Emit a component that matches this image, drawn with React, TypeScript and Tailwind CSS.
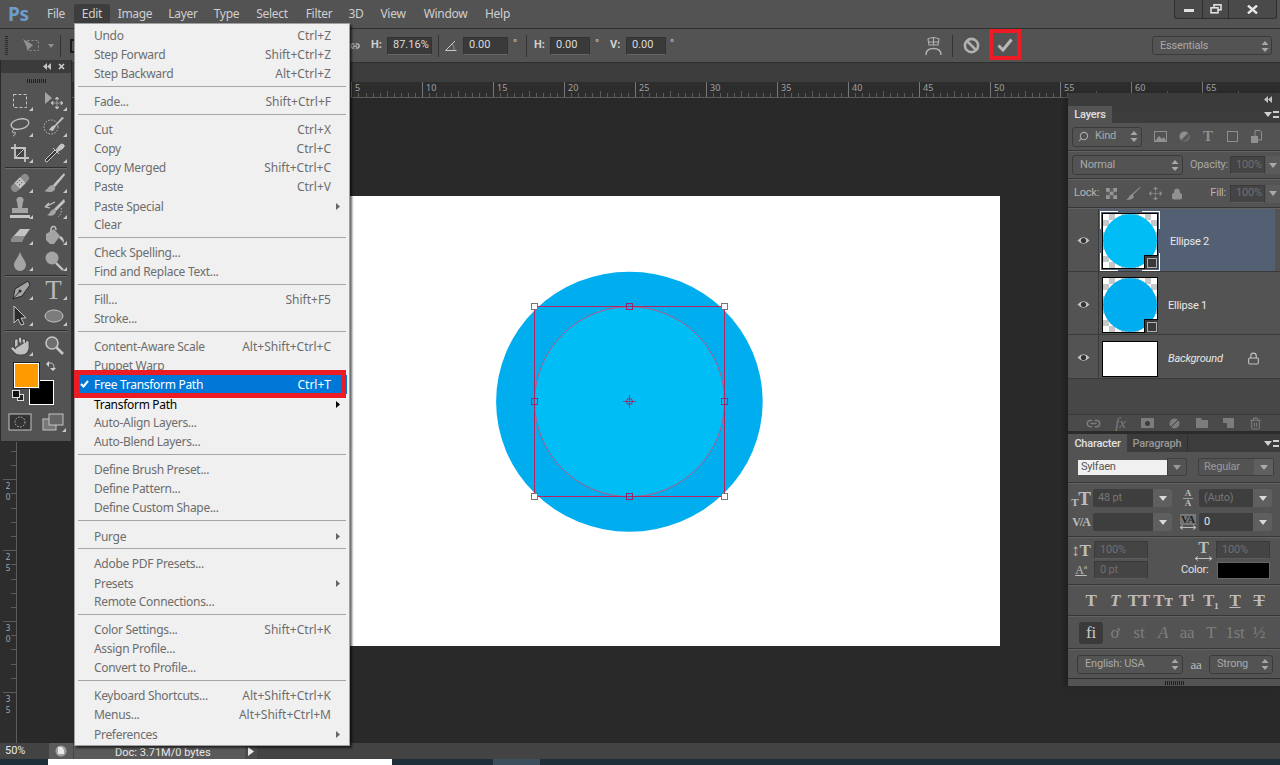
import React from 'react';
import { Hand, Link2, Trash2, Lock, Search } from 'lucide-react';

type MenuItem = { label: string; keys?: string; arrow?: boolean; black?: boolean; active?: boolean } | 'sep';

const MENU: MenuItem[] = [
  { label: 'Undo', keys: 'Ctrl+Z' },
  { label: 'Step Forward', keys: 'Shift+Ctrl+Z' },
  { label: 'Step Backward', keys: 'Alt+Ctrl+Z' },
  'sep',
  { label: 'Fade...', keys: 'Shift+Ctrl+F' },
  'sep',
  { label: 'Cut', keys: 'Ctrl+X' },
  { label: 'Copy', keys: 'Ctrl+C' },
  { label: 'Copy Merged', keys: 'Shift+Ctrl+C' },
  { label: 'Paste', keys: 'Ctrl+V' },
  { label: 'Paste Special', arrow: true },
  { label: 'Clear' },
  'sep',
  { label: 'Check Spelling...' },
  { label: 'Find and Replace Text...' },
  'sep',
  { label: 'Fill...', keys: 'Shift+F5' },
  { label: 'Stroke...' },
  'sep',
  { label: 'Content-Aware Scale', keys: 'Alt+Shift+Ctrl+C' },
  { label: 'Puppet Warp' },
  { label: 'Free Transform Path', keys: 'Ctrl+T', active: true },
  { label: 'Transform Path', arrow: true, black: true },
  { label: 'Auto-Align Layers...' },
  { label: 'Auto-Blend Layers...' },
  'sep',
  { label: 'Define Brush Preset...' },
  { label: 'Define Pattern...' },
  { label: 'Define Custom Shape...' },
  'sep',
  { label: 'Purge', arrow: true },
  'sep',
  { label: 'Adobe PDF Presets...' },
  { label: 'Presets', arrow: true },
  { label: 'Remote Connections...' },
  'sep',
  { label: 'Color Settings...', keys: 'Shift+Ctrl+K' },
  { label: 'Assign Profile...' },
  { label: 'Convert to Profile...' },
  'sep',
  { label: 'Keyboard Shortcuts...', keys: 'Alt+Shift+Ctrl+K' },
  { label: 'Menus...', keys: 'Alt+Shift+Ctrl+M' },
  { label: 'Preferences', arrow: true },
];

function Stepper() {
  return (
    <svg width="8" height="13" viewBox="0 0 8 13" className="shrink-0">
      <path d="M4 1 L7.5 5 L0.5 5 Z M4 12 L7.5 8 L0.5 8 Z" fill="#a8a8a8" />
    </svg>
  );
}

function Caret({ color = '#d8d8d8' }: { color?: string }) {
  return (
    <svg width="8" height="5" viewBox="0 0 8 5" className="shrink-0">
      <path d="M0 0 H8 L4 5 Z" fill={color} />
    </svg>
  );
}

function Corner() {
  return (
    <svg width="4" height="4" viewBox="0 0 4 4" className="absolute right-[3px] bottom-[3px]">
      <path d="M4 0 V4 H0 Z" fill="#c8c8c8" />
    </svg>
  );
}

function Tool({ children, corner = true }: { children: React.ReactNode; corner?: boolean }) {
  return (
    <div className="relative w-[33px] h-[26px] flex items-center justify-center">
      <svg width="24" height="24" viewBox="0 0 24 24">
        {children}
      </svg>
      {corner && <Corner />}
    </div>
  );
}

function ToolsPanel() {
  const g = '#a4a4a4';
  const l = '#c4c4c4';
  return (
    <div className="absolute left-0 top-[60px] w-[72px] h-[382px] bg-[#535353] border-l border-r border-b border-[#2a2a2a] flex flex-col">
      <div className="h-[13px] bg-[#3b3b3b] flex items-center justify-end gap-[7px] pr-[6px] shrink-0">
        <svg width="8" height="7" viewBox="0 0 8 7"><path d="M4 0 V7 L0 3.5 Z M8 0 V7 L4 3.5 Z" fill="#c0c0c0" /></svg>
        <svg width="7" height="7" viewBox="0 0 7 7"><path d="M1 1 L6 6 M6 1 L1 6" stroke="#d0d0d0" strokeWidth="1.6" /></svg>
      </div>
      <div className="h-[15px] flex items-center justify-center shrink-0">
        <div className="w-[19px] h-[4px] bg-[repeating-linear-gradient(90deg,#1f1f1f_0,#1f1f1f_1px,transparent_1px,transparent_2px)]" />
      </div>
      <div className="grid grid-cols-2 pl-[2px]">
        <Tool><rect x="5.5" y="5.5" width="13" height="13" fill="none" stroke={l} strokeDasharray="3 2" /></Tool>
        <Tool>
          <path d="M3 3 V15 L10 9 Z" fill={g} />
          <path d="M15 8 V20 M9 14 H21 M15 8 l-2 2 h4 Z M15 20 l-2 -2 h4 Z M9 14 l2 -2 v4 Z M21 14 l-2 -2 v4 Z" stroke={l} fill={l} strokeWidth="0.6" />
        </Tool>
        <Tool>
          <ellipse cx="12" cy="9" rx="9" ry="5" fill="none" stroke={l} strokeWidth="1.3" transform="rotate(-12 12 9)" />
          <path d="M6 14 C3 17 5 19 7 17 C8 19 6 21 5 21" fill="none" stroke={l} strokeWidth="1" />
        </Tool>
        <Tool>
          <circle cx="9" cy="12" r="7" fill="none" stroke={l} strokeDasharray="1.5 1.5" />
          <path d="M22 3 L14 11 L11 16 L7 15 C9 12 10 11 13 10 L20 2 Z" fill={l} />
        </Tool>
        <Tool>
          <path d="M7 3 V17 H21 M3 7 H17 V21" fill="none" stroke={l} strokeWidth="1.8" />
          <rect x="8" y="8" width="8" height="8" fill="#3a3a3a" opacity="0.6" />
          <path d="M8 16 L16 8" stroke={l} strokeWidth="1" />
        </Tool>
        <Tool>
          <path d="M4 21 L3 19 L13 9 L15 11 L5 21 Z" fill="#3a3a3a" stroke={l} />
          <path d="M11 7 L17 13 M14 9 L18 4 Q20 2 22 4 Q23 6 20 8 L15 11" fill={l} stroke={l} />
        </Tool>
      </div>
      <div className="h-[1px] mx-[4px] my-[1px] bg-[#2e2e2e] border-b border-[#6a6a6a] box-content shrink-0" />
      <div className="grid grid-cols-2 pl-[2px]">
        <Tool>
          <g transform="rotate(-45 12 12)">
            <rect x="1" y="8" width="22" height="8" rx="4" fill="#8c8c8c" />
            <rect x="8" y="8" width="8" height="8" fill={l} />
            <path d="M10 10 h1 M13 10 h1 M10 13 h1 M13 13 h1" stroke="#444" />
          </g>
        </Tool>
        <Tool>
          <path d="M22 2 L11 14 L13 16 L23 4 Z" fill={l} />
          <path d="M11 14 C6 14 6 19 2 20 C8 22 14 21 13 16 Z" fill={g} />
        </Tool>
        <Tool>
          <path d="M9 5 a3.5 3.5 0 1 1 6 0 L14 11 H20 V16 H4 V11 H10 Z" fill={g} />
          <rect x="2" y="18" width="20" height="3" fill={l} />
        </Tool>
        <Tool>
          <path d="M22 2 L12 12 L14 14 L23 5 Z" fill={l} />
          <path d="M12 12 C8 13 8 17 5 18 C9 20 14 18 14 14 Z" fill={g} />
          <path d="M3 10 L13 5 M3 10 L7 6 M3 10 L8 11" stroke={l} fill="none" strokeWidth="1.2" />
          <path d="M19 11 A8 8 0 0 1 16 20" stroke={l} fill="none" strokeDasharray="1.5 1.5" />
        </Tool>
        <Tool>
          <path d="M3 16 L12 6 H22 L17 13 H7 Z" fill={l} />
          <path d="M3 16 L7 13 H17 L14 19 H3 Z" fill="#8c8c8c" />
        </Tool>
        <Tool>
          <path d="M4 11 L12 6 L18 13 L12 21 H8 L4 17 Z" fill={g} />
          <path d="M9 9 C8 3 14 1 14 7" fill="none" stroke={l} strokeWidth="1.4" />
          <path d="M18 13 C21 14 22 16 22 20 C20 18 19 16 17 15 Z" fill={l} />
        </Tool>
        <Tool><path d="M12 3 C14 9 18 12 18 16 A6 6 0 0 1 6 16 C6 12 10 9 12 3 Z" fill={g} /></Tool>
        <Tool>
          <circle cx="10" cy="9" r="6.5" fill={g} />
          <path d="M14 14 L21 21" stroke={l} strokeWidth="2.4" />
        </Tool>
      </div>
      <div className="h-[1px] mx-[4px] mt-[1px] bg-[#2e2e2e] border-b border-[#6a6a6a] box-content shrink-0" />
      <div className="grid grid-cols-2 pl-[2px]">
        <Tool>
          <path d="M20 3 L22 7 L14 18 L5 21 L7 11 Z" fill={g} stroke="#2a2a2a" />
          <path d="M5 21 L12 13" stroke="#2a2a2a" />
          <circle cx="12" cy="13" r="1.5" fill="#2a2a2a" />
        </Tool>
        <div className="relative w-[33px] h-[26px] flex items-center justify-center font-['Liberation_Serif',serif] text-[27px] leading-none text-[#b8b8b8]">
          T
          <Corner />
        </div>
        <Tool><path d="M6 2 V19 L10 15 L13 21 L16 20 L13 14 H18 Z" fill="#2c2c2c" stroke={l} /></Tool>
        <Tool><ellipse cx="12" cy="12" rx="9" ry="6" fill="#7c7c7c" stroke={l} /></Tool>
      </div>
      <div className="h-[1px] mx-[4px] my-[1px] bg-[#2e2e2e] border-b border-[#6a6a6a] box-content shrink-0" />
      <div className="grid grid-cols-2 pl-[2px]">
        <div className="relative w-[33px] h-[26px] flex items-center justify-center">
          <Hand size={22} fill="#c0c0c0" color="#444444" strokeWidth={1.2} />
          <Corner />
        </div>
        <Tool corner={false}>
          <circle cx="10" cy="9" r="6" fill="#6e6e6e" stroke={l} strokeWidth="1.6" />
          <path d="M14.5 13.5 L21 20" stroke={l} strokeWidth="2.6" />
        </Tool>
      </div>
      <div className="relative h-[50px] shrink-0">
        <div className="absolute left-[28px] top-[21px] w-[25px] h-[25px] bg-black border border-white" />
        <div className="absolute left-[13px] top-[4px] w-[25px] h-[25px] bg-[#ff9a00] border border-white outline outline-[#222]" />
        <svg width="12" height="12" viewBox="0 0 12 12" className="absolute left-[44px] top-[1px]">
          <path d="M1 4 L4 1 L4 7 Z M8 11 L11 8 L5 8 Z" fill="#d0d0d0" />
          <path d="M4 3 C8 3 9 4 9 8" fill="none" stroke="#d0d0d0" />
        </svg>
        <div className="absolute left-[16px] top-[35px] w-[7px] h-[7px] bg-[#222] border border-[#ddd]" />
        <div className="absolute left-[11px] top-[31px] w-[8px] h-[8px] bg-[#111] border border-[#ddd]" />
      </div>
      <div className="flex pl-[2px]">
        <Tool corner={false}>
          <rect x="1" y="4" width="22" height="16" fill="#333" stroke={l} />
          <circle cx="12" cy="12" r="5" fill="none" stroke={l} strokeDasharray="1.5 1.5" />
        </Tool>
        <Tool>
          <rect x="2" y="9" width="13" height="11" fill="#777" stroke={l} />
          <rect x="8" y="4" width="14" height="11" fill="#666" stroke={l} />
        </Tool>
      </div>
    </div>
  );
}

function EditMenu() {
  return (
    <div className="absolute left-[74px] top-[23px] w-[276px] h-[723px] bg-[#f0f0f0] border border-[#a0a0a0] shadow-[2px_2px_2px_rgba(0,0,0,0.6)] pt-[2px] text-[12px] text-[#6d6d6d]">
      {MENU.map((item, i) =>
        item === 'sep' ? (
          <div key={i} className="h-[9px] pt-[3px] mx-[3px]">
            <div className="h-[1px] bg-[#a6a6a6]" />
          </div>
        ) : (
          <div
            key={i}
            className={
              'relative h-[19px] ml-[4px] mr-[2px] pl-[15px] flex items-center justify-between ' +
              (item.active ? 'bg-[#0078d7] text-white ' : '') +
              (item.black ? 'text-black ' : '') +
              (item.arrow ? 'pr-[7px] pt-[2px]' : 'pr-[16px]')
            }
          >
            {item.active && (
              <svg width="9" height="8" viewBox="0 0 9 8" className="absolute left-[1px] top-[5px]">
                <path d="M1 4 L3.5 6.5 L8 1" fill="none" stroke="#fff" strokeWidth="2" />
              </svg>
            )}
            <span className="tracking-[-0.3px]">{item.label}</span>
            {item.keys && <span>{item.keys}</span>}
            {item.arrow && (
              <svg width="4" height="7" viewBox="0 0 4 7">
                <path d="M0 0 L4 3.5 L0 7 Z" fill={item.black ? '#000' : '#666'} />
              </svg>
            )}
          </div>
        ),
      )}
    </div>
  );
}

const MENU_BAR: [string, string][] = [
  ['File', 'w-[36px]'],
  ['Edit', 'w-[36px] bg-[#3d3d3d] rounded-t-[3px]'],
  ['Image', 'w-[50px]'],
  ['Layer', 'w-[46px]'],
  ['Type', 'w-[41px]'],
  ['Select', 'w-[50px]'],
  ['Filter', 'w-[44px]'],
  ['3D', 'w-[30px]'],
  ['View', 'w-[44px]'],
  ['Window', 'w-[61px]'],
  ['Help', 'w-[43px]'],
];

function MenuBar() {
  return (
    <div className="h-[29px] shrink-0 bg-[#535353] border-b border-[#2f2f2f] flex items-start pl-[8px] text-[12px] text-[#cfcfcf] tracking-[-0.3px]">
      <div className="w-[30px] h-[28px] flex items-center text-[19px] font-bold text-[#6d9dcc] leading-none">Ps</div>
      {MENU_BAR.map(([name, cls]) => (
        <div key={name} className={'mt-[4px] h-[19px] flex items-center justify-center ' + cls}>
          {name}
        </div>
      ))}
      <div className="ml-auto mr-[3px] w-[103px] h-[19px] bg-[#4a4a4a] border border-t-0 border-[#2e2e2e] rounded-b-[3px] flex">
        <div className="w-[28px] flex items-center justify-center border-r border-[#2e2e2e]">
          <div className="w-[10px] h-[3px] mt-[3px] bg-[#e0e0e0]" />
        </div>
        <div className="w-[26px] flex items-center justify-center border-r border-[#2e2e2e]">
          <svg width="12" height="10" viewBox="0 0 12 10">
            <rect x="4" y="0.8" width="7" height="5" fill="none" stroke="#e0e0e0" strokeWidth="1.6" />
            <rect x="1" y="3.8" width="7" height="5" fill="#4a4a4a" stroke="#e0e0e0" strokeWidth="1.6" />
          </svg>
        </div>
        <div className="flex-1 flex items-center justify-center">
          <svg width="11" height="9" viewBox="0 0 11 9"><path d="M1 0.5 L10 8.5 M10 0.5 L1 8.5" stroke="#e4e4e4" strokeWidth="2.4" /></svg>
        </div>
      </div>
    </div>
  );
}

function NumField({ value, cls }: { value: string; cls: string }) {
  return (
    <div className={'h-[18px] bg-[#3a3a3a] border border-[#333] border-b-[#666] flex items-center pl-[5px] text-[#dcdcdc] shrink-0 ' + cls}>
      {value}
    </div>
  );
}

function OptionsBar() {
  return (
    <div className="h-[34px] shrink-0 bg-[#535353] border-b border-[#2f2f2f] flex items-center font-['Roboto',sans-serif] text-[11px] text-[#d0d0d0]">
      <div className="ml-[5px] w-[3px] h-[19px] bg-[repeating-linear-gradient(0deg,#2a2a2a_0,#2a2a2a_1px,transparent_1px,transparent_2px)]" />
      <svg width="17" height="14" viewBox="0 0 17 14" className="ml-[15px]">
        <path d="M0 0 L10 6 L5 11 Z" fill="#909090" />
        <rect x="4.5" y="1.5" width="11" height="10" fill="none" stroke="#909090" strokeDasharray="2 2" />
      </svg>
      <div className="ml-[8px] w-[6px]"><svg width="6" height="4" viewBox="0 0 6 4"><path d="M0 0 H6 L3 4 Z" fill="#909090" /></svg></div>
      <div className="ml-[6px] w-px h-[22px] bg-[#333]" />
      <div className="ml-[9px] w-[14px] h-[14px] border-2 border-[#1c1c1c]" />
      <Link2 size={10} color="#bdbdbd" className="ml-[266px] shrink-0" strokeWidth={3} />
      <div className="ml-[11px] w-[11px] font-bold">H:</div>
      <NumField value="87.16%" cls="ml-[5px] w-[45px]" />
      <div className="ml-[6px] w-px h-[22px] bg-[#333]" />
      <svg width="12" height="11" viewBox="0 0 12 11" className="ml-[6px]">
        <path d="M0.5 10.5 H11.5 M0.5 10.5 L10 1" stroke="#c8c8c8" fill="none" />
        <path d="M7 4 A7 7 0 0 1 9 10" stroke="#c8c8c8" strokeDasharray="1 1" fill="none" />
      </svg>
      <NumField value="0.00" cls="ml-[6px] w-[45px]" />
      <div className="ml-[5px] w-[5px] mb-[3px]">°</div>
      <div className="ml-[8px] w-px h-[22px] bg-[#333]" />
      <div className="ml-[7px] w-[11px] font-bold">H:</div>
      <NumField value="0.00" cls="ml-[5px] w-[40px]" />
      <div className="ml-[5px] w-[6px] mb-[3px]">°</div>
      <div className="ml-[9px] w-[10px] font-bold">V:</div>
      <NumField value="0.00" cls="ml-[6px] w-[40px]" />
      <div className="ml-[4px] w-[6px] mb-[3px]">°</div>
      <div className="flex-1" />
      <svg width="17" height="20" viewBox="0 0 17 20">
        <path d="M3 3 Q8.5 0 14 3 L13 9 H4 Z M3.5 6 H13.5 M8.5 2 V9" fill="none" stroke="#b4b4b4" strokeWidth="1.1" />
        <path d="M1 19 Q1 12.5 8.5 12.5 Q16 12.5 16 19" fill="none" stroke="#b4b4b4" strokeWidth="1.4" />
      </svg>
      <div className="ml-[10px] w-px h-[22px] bg-[#333]" />
      <svg width="17" height="17" viewBox="0 0 17 17" className="ml-[10px]">
        <circle cx="8.5" cy="8.5" r="6.6" fill="none" stroke="#b0b0b0" strokeWidth="2.6" />
        <path d="M4 4 L13 13" stroke="#b0b0b0" strokeWidth="2.6" />
      </svg>
      <div className="ml-[9px] w-[32px] h-[31px] mb-[2px] border-[4px] border-[#ed1c24] flex items-center justify-center">
        <svg width="16" height="14" viewBox="0 0 16 14">
          <path d="M1.5 7.5 L6 12 L14.5 1.5" fill="none" stroke="#b8b8b8" strokeWidth="3" />
        </svg>
      </div>
      <div className="ml-[131px] mr-[8px] w-[120px] h-[19px] pt-px bg-[#535353] border border-[#3a3a3a] rounded-[3px] flex items-center justify-between pl-[7px] pr-[2px] tracking-[-0.2px] text-[#a8a8a8]">
        Essentials
        <Stepper />
      </div>
    </div>
  );
}

const H_TICKS = Array.from({ length: 140 }, (_, i) => i);

function HRuler() {
  return (
    <div className="h-[16px] shrink-0 bg-[#2d2d2d]">
      <svg width="1280" height="16" viewBox="0 0 1280 16" className="block">
        <path d="M0 15.5 H1280" stroke="#5c5c5c" />
        {H_TICKS.map((i) => {
          const x = Math.round(280.5 + i * 7.09) + 0.5;
          const major = i % 10 === 0;
          return <path key={i} d={`M${x} ${major ? 0 : i % 5 === 0 ? 9 : 11} V15`} stroke={major ? '#777' : '#5c5c5c'} />;
        })}
        {Array.from({ length: 13 }, (_, i) => (
          <text key={i} x={Math.round(280.5 + (i + 1) * 70.9) + 4} y="9" fontSize="9" fill="#a0a0a0">
            {(i + 1) * 5}
          </text>
        ))}
      </svg>
    </div>
  );
}

function VRuler() {
  return (
    <div className="w-[17px] shrink-0 bg-[#2d2d2d]">
      <svg width="17" height="645" viewBox="0 0 17 645" className="block">
        <path d="M16.5 0 V645" stroke="#5c5c5c" />
        {Array.from({ length: 90 }, (_, i) => {
          const y = Math.round(594 - i * 14.18) + 0.5;
          return <path key={i} d={`M${i % 5 === 0 ? 3 : 11} ${y} H16`} stroke="#5c5c5c" />;
        })}
        {[
          ['35', 595],
          ['30', 524],
          ['25', 453],
          ['20', 382],
        ].map(([label, y]) => (
          <text key={label} x="8" y={y} fontSize="8" fill="#a8a8a8" className="[writing-mode:vertical-rl] [text-orientation:upright]">
            {label}
          </text>
        ))}
      </svg>
    </div>
  );
}

function Handle({ x, y, corner }: { x: number; y: number; corner?: boolean }) {
  return <rect x={x - 3} y={y - 3} width="6" height="6" fill={corner ? '#ffffff' : 'none'} stroke={corner ? '#777' : '#93286a'} />;
}

function DocArt() {
  return (
    <svg width="650" height="450" viewBox="0 0 650 450" className="block">
      <ellipse cx="279.4" cy="205.7" rx="133.3" ry="130" fill="#00adef" />
      <circle cx="279.6" cy="205.7" r="95" fill="#00bdf6" stroke="#e0406a" strokeWidth="0.8" />
      <rect x="184.5" y="110.5" width="190" height="190" fill="none" stroke="#b5245f" />
      <Handle x={184.5} y={110.5} corner />
      <Handle x={279.5} y={110.5} />
      <Handle x={374.5} y={110.5} corner />
      <Handle x={184.5} y={205.5} />
      <Handle x={374.5} y={205.5} />
      <Handle x={184.5} y={300.5} corner />
      <Handle x={279.5} y={300.5} />
      <Handle x={374.5} y={300.5} corner />
      <circle cx="279.5" cy="205.5" r="3" fill="none" stroke="#93286a" />
      <path d="M279.5 199 V212 M273 205.5 H286" stroke="#93286a" strokeWidth="0.8" />
    </svg>
  );
}

function Thumb({ color }: { color: string }) {
  return (
    <div className="relative w-[56px] h-[56px] shrink-0 border border-black bg-[repeating-conic-gradient(#c8c8c8_0_25%,#ffffff_0_50%)] bg-[length:12px_12px]">
      <div className="w-[54px] h-[54px] rounded-full" style={{ backgroundColor: color }} />
      <div className="absolute right-[-1px] bottom-[-1px] w-[14px] h-[14px] bg-[#3a3a3a] border-l border-t border-black flex items-center justify-center">
        <div className="w-[10px] h-[10px] border border-[#b0b0b0]" />
      </div>
    </div>
  );
}

function Eye() {
  return (
    <svg width="13" height="9" viewBox="0 0 13 9">
      <path d="M0.5 4.5 Q6.5 -2 12.5 4.5 Q6.5 11 0.5 4.5 Z" fill="#c4c4c4" />
      <circle cx="6.5" cy="4.5" r="2.6" fill="#333" />
    </svg>
  );
}

function LayerRow({ name, selected, h, italic, children, lock }: { name: string; selected?: boolean; h: string; italic?: boolean; children: React.ReactNode; lock?: boolean }) {
  return (
    <div className={'flex border-b border-[#3a3a3a] shrink-0 ' + h}>
      <div className={'w-[31px] border-r border-[#3a3a3a] flex items-center justify-center shrink-0 ' + (selected ? '' : 'pt-[2px]')}><Eye /></div>
      <div className={'w-[176px] flex items-center pl-[3px] ' + (selected ? 'bg-[#535f72] pt-[2px]' : 'pt-[4px]')}>
        {children}
        <span className={'ml-[10px] pt-[2px] text-[#e8e8e8] ' + (italic ? 'italic' : '')}>{name}</span>
        {lock && <Lock size={13} color="#c4c4c4" className="ml-[24px]" />}
      </div>
    </div>
  );
}

function Select({ label, cls, icon }: { label: string; cls: string; icon?: React.ReactNode }) {
  return (
    <div className={'h-[20px] border border-[#3a3a3a] rounded-[3px] flex items-center pl-[7px] pr-[3px] text-[#a8a8a8] shrink-0 ' + cls}>
      {icon}
      <span className="flex-1">{label}</span>
      <Stepper />
    </div>
  );
}

function Rule() {
  return <div className="h-[1px] bg-[#373737] border-b border-[#626262] box-content shrink-0" />;
}

function FieldArrow({ cls, label, dim = true }: { cls: string; label?: string; dim?: boolean }) {
  return (
    <div className={'h-[18px] bg-[#3e3e3e] rounded-[2px] flex items-center justify-between shrink-0 ' + cls}>
      <span className={'pl-[5px] ' + (dim ? 'text-[#777]' : 'text-[#e8e8e8]')}>{label}</span>
      <span className="w-[19px] h-full bg-[#5f5f5f] rounded-r-[2px] flex items-center justify-center"><Caret /></span>
    </div>
  );
}

function Dim({ cls, label }: { cls: string; label: string }) {
  return (
    <div className={'h-[18px] bg-[#444] border border-[#3a3a3a] border-b-[#5c5c5c] flex items-center pl-[5px] text-[#6f6f6f] shrink-0 ' + cls}>
      {label}
    </div>
  );
}

const SERIF = "font-['Liberation_Serif',serif]";

function LayersPanel() {
  return (
    <>
      <div className="h-[17px] bg-[#3c3c3c] flex shrink-0">
        <div className="w-[44px] pt-[2px] bg-[#535353] flex items-center justify-center font-medium text-[#e0e0e0]">Layers</div>
        <div className="ml-auto mr-[1px] flex items-center gap-[1px]">
          <Caret color="#d0d0d0" />
          <div className="w-[6px] h-[7px] border-y-2 border-[#d0d0d0]" />
        </div>
      </div>
      <div className="h-[27px] flex items-center pl-[4px] shrink-0">
        <Select label="Kind" cls="w-[70px] !pl-[5px]" icon={<Search size={11} color="#a8a8a8" className="mr-[6px] -scale-x-100" strokeWidth={2.4} />} />
        <div className="ml-[6px] grid grid-cols-[repeat(5,24px)] justify-items-center items-center text-[#8e8e8e]">
          <svg width="13" height="11" viewBox="0 0 13 11"><rect x="0.5" y="0.5" width="12" height="10" fill="none" stroke="#909090" /><path d="M1 10 L5 5 L8 8 L10 6 L12 10 Z" fill="#909090" /></svg>
          <svg width="11" height="11" viewBox="0 0 11 11"><circle cx="5.5" cy="5.5" r="5" fill="#909090" /><path d="M9 2 L2 9 A5 5 0 0 0 9 2" fill="#5a5a5a" /></svg>
          <span className={SERIF + ' text-[15px] leading-none font-bold'}>T</span>
          <div className="w-[11px] h-[11px] border border-[#909090]" />
          <svg width="11" height="13" viewBox="0 0 11 13"><path d="M4 0.5 H9 L10.5 2 V10 H4 Z" fill="none" stroke="#909090" /><rect x="0" y="6" width="7" height="7" fill="#909090" /></svg>
        </div>
      </div>
      <Rule />
      <div className="h-[26px] flex items-center pl-[4px] shrink-0">
        <Select label="Normal" cls="w-[111px]" />
        <span className="ml-[7px] w-[42px] text-[#a8a8a8]">Opacity:</span>
        <Dim label="100%" cls="w-[35px]" />
        <div className="ml-px w-[14px] h-[18px] bg-[#5a5a5a] flex items-center justify-center shrink-0"><Caret color="#aaa" /></div>
      </div>
      <Rule />
      <div className="h-[27px] flex items-center pl-[6px] shrink-0 text-[#b4b4b4]">
        <span className="w-[27px]">Lock:</span>
        <div className="w-[22px] flex justify-center">
          <svg width="11" height="11" viewBox="0 0 12 12"><rect width="12" height="12" fill="#5c5c5c" /><path d="M0 0 H4 V4 H0 Z M8 0 H12 V4 H8 Z M4 4 H8 V8 H4 Z M0 8 H4 V12 H0 Z M8 8 H12 V12 H8 Z" fill="#969696" /></svg>
        </div>
        <div className="w-[23px] flex justify-center"><svg width="15" height="14" viewBox="0 0 15 14"><path d="M15 0 L7 8 L8 10 C6 13 2 13 0 13 C3 12 3 8 6 7 L14 0 Z" fill="#909090" /></svg></div>
        <div className="w-[21px] flex justify-center"><svg width="13" height="13" viewBox="0 0 13 13"><path d="M6.5 0 V13 M0 6.5 H13 M6.5 0 l-2 2 h4 Z M6.5 13 l-2 -2 h4 Z M0 6.5 l2 -2 v4 Z M13 6.5 l-2 -2 v4 Z" stroke="#909090" fill="#909090" strokeWidth="0.6" /></svg></div>
        <div className="w-[23px] flex justify-center"><Lock size={12} color="#909090" fill="#909090" /></div>
        <span className="ml-[22px] w-[20px]">Fill:</span>
        <Dim label="100%" cls="w-[35px]" />
        <div className="ml-px w-[14px] h-[18px] bg-[#5a5a5a] flex items-center justify-center shrink-0"><Caret color="#aaa" /></div>
      </div>
      <Rule />
      <LayerRow name="Ellipse 2" selected h="h-[63px]">
        <div className="relative -ml-[2px] p-[2px]">
          <Thumb color="#00bdf6" />
          <div className="absolute left-0 top-0 w-[18px] h-[18px] border-l border-t border-white" />
          <div className="absolute right-0 top-0 w-[18px] h-[18px] border-r border-t border-white" />
          <div className="absolute left-0 bottom-0 w-[18px] h-[18px] border-l border-b border-white" />
          <div className="absolute right-0 bottom-0 w-[18px] h-[18px] border-r border-b border-white" />
        </div>
      </LayerRow>
      <LayerRow name="Ellipse 1" h="h-[63px]">
        <Thumb color="#00adef" />
      </LayerRow>
      <LayerRow name="Background" italic lock h="h-[44px]">
        <div className="w-[56px] h-[36px] bg-white border border-black shrink-0" />
      </LayerRow>
      <div className="h-[35px] bg-[#474747] shrink-0" />
      <div className="h-[17px] bg-[#4a4a4a] border-t border-[#3a3a3a] grid grid-cols-[repeat(7,27px)] justify-items-center items-center pl-[12px] shrink-0 text-[#7c7c7c]">
        <Link2 size={15} strokeWidth={2.4} />
        <span className={SERIF + ' italic text-[15px] leading-none'}>fx</span>
        <div className="w-[13px] h-[10px] bg-[#7c7c7c] flex items-center justify-center"><div className="w-[5px] h-[5px] rounded-full bg-[#3c3c3c]" /></div>
        <svg width="11" height="11" viewBox="0 0 11 11"><circle cx="5.5" cy="5.5" r="5" fill="#7c7c7c" /><path d="M9 2 L2 9" stroke="#3c3c3c" /></svg>
        <svg width="12" height="10" viewBox="0 0 12 10"><path d="M0 0 H5 L6 2 H12 V10 H0 Z" fill="#7c7c7c" /></svg>
        <svg width="11" height="10" viewBox="0 0 11 10"><path d="M0 0 H11 V10 H4 V5 H0 Z" fill="#7c7c7c" /></svg>
        <Trash2 size={13} />
      </div>
    </>
  );
}

function CharIcon({ children, cls }: { children: React.ReactNode; cls?: string }) {
  return <div className={SERIF + ' flex items-center justify-center leading-none text-[#bcbcbc] font-bold shrink-0 ' + (cls ?? '')}>{children}</div>;
}

function CharacterPanel() {
  const styles = ['T', 'T', 'TT', 'Tт', 'T¹', 'T₁', 'T', 'T'];
  const feats = ['fi', 'ơ', 'st', 'A', 'aa', 'T', '1st', '½'];
  return (
    <>
      <div className="h-[18px] bg-[#3c3c3c] flex font-medium shrink-0">
        <div className="w-[59px] pt-[2px] bg-[#535353] flex items-center justify-center text-[#e0e0e0]">Character</div>
        <div className="w-[61px] pt-[2px] border-r border-[#2f2f2f] flex items-center justify-center text-[#999]">Paragraph</div>
        <div className="ml-auto mr-[1px] flex items-center gap-[1px]">
          <Caret color="#d0d0d0" />
          <div className="w-[6px] h-[7px] border-y-2 border-[#d0d0d0]" />
        </div>
      </div>
      <div className="h-[30px] flex items-center pl-[10px] shrink-0">
        <div className="w-[89px] h-[15px] bg-[#f0f0f0] flex items-center pl-[3px] text-[#555]">Sylfaen</div>
        <div className="w-[20px] h-[18px] border border-[#3f3f3f] rounded-r-[2px] flex items-center justify-center"><Caret color="#999" /></div>
        <div className="ml-[11px] w-[76px] h-[18px] border border-[#3f3f3f] rounded-[2px] flex items-center justify-between pl-[5px] text-[#999]">
          Regular
          <span className="w-[19px] h-full bg-[#5f5f5f] flex items-center justify-center"><Caret color="#aaa" /></span>
        </div>
      </div>
      <Rule />
      <div className="h-[52px] grid grid-cols-[107px_1fr] grid-rows-[18px_18px] gap-y-[6px] pt-[5px] pl-[5px] shrink-0">
        <div className="flex items-center">
          <CharIcon cls="w-[16px] text-[#a0a0a0] items-end">
            <span className="text-[11px]">T</span>
            <span className="text-[19px]">T</span>
          </CharIcon>
          <FieldArrow cls="ml-[4px] w-[79px]" label="48 pt" />
        </div>
        <div className="flex items-center">
          <CharIcon cls="w-[16px] !flex-col text-[9px] text-[#a0a0a0]">
            <span className="border-b border-[#a0a0a0] px-[2px]">A</span>
            <span>A</span>
          </CharIcon>
          <FieldArrow cls="ml-[3px] w-[73px]" label="(Auto)" />
        </div>
        <div className="flex items-center">
          <CharIcon cls="w-[16px] text-[12px] tracking-[-1px] text-[#a0a0a0]">V/A</CharIcon>
          <FieldArrow cls="ml-[4px] w-[79px]" />
        </div>
        <div className="flex items-center">
          <CharIcon cls="w-[16px] text-[11px] !flex-col">
            <span className="bg-[#777] px-[1px] text-[#222]">VA</span>
            <svg width="16" height="5" viewBox="0 0 16 5"><path d="M0 2.5 H16 M0 2.5 L3 0.5 M0 2.5 L3 4.5 M16 2.5 L13 0.5 M16 2.5 L13 4.5" stroke="#bcbcbc" /></svg>
          </CharIcon>
          <FieldArrow cls="ml-[3px] w-[73px]" label="0" dim={false} />
        </div>
      </div>
      <Rule />
      <div className="h-[46px] grid grid-cols-[107px_1fr] grid-rows-[18px_18px] gap-y-[2px] pt-[3px] pl-[5px] shrink-0">
        <div className="flex items-center">
          <CharIcon cls="w-[16px] text-[17px]">↕T</CharIcon>
          <Dim label="100%" cls="ml-[5px] w-[54px]" />
        </div>
        <div className="flex items-center pl-[15px]">
          <CharIcon cls="w-[17px] !flex-col text-[16px]">
            <span>T</span>
            <svg width="17" height="5" viewBox="0 0 17 5"><path d="M0 2.5 H17 M0 2.5 L3 0.5 M0 2.5 L3 4.5 M17 2.5 L14 0.5 M17 2.5 L14 4.5" stroke="#bcbcbc" /></svg>
          </CharIcon>
          <Dim label="100%" cls="ml-[4px] w-[54px]" />
        </div>
        <div className="flex items-center">
          <CharIcon cls="w-[16px] text-[12px] underline font-normal">Aª</CharIcon>
          <Dim label="0 pt" cls="ml-[5px] w-[54px]" />
        </div>
        <div className="flex items-center pl-[1px]">
          <span className="w-[36px] text-[#e0e0e0]">Color:</span>
          <div className="w-[53px] h-[17px] bg-black border border-[#666]" />
        </div>
      </div>
      <Rule />
      <div className="h-[29px] grid grid-cols-8 pl-[11px] pr-[9px] items-center shrink-0">
        {styles.map((s, i) => (
          <CharIcon key={i} cls={'text-[17px] ' + (i === 1 ? 'italic ' : '') + (i === 6 ? 'underline ' : '') + (i === 7 ? 'line-through' : '')}>{s}</CharIcon>
        ))}
      </div>
      <Rule />
      <div className="h-[31px] grid grid-cols-8 pl-[11px] pr-[9px] items-center shrink-0">
        {feats.map((s, i) => (
          <CharIcon key={i} cls={'h-[22px] text-[17px] ' + (i === 0 ? 'bg-[#3a3a3a] rounded-[3px] !text-[#c8c8c8] font-normal' : '!text-[#7e7e7e] font-normal') + (i === 3 ? ' italic' : '')}>{s}</CharIcon>
        ))}
      </div>
      <Rule />
      <div className="h-[28px] flex items-center pl-[9px] shrink-0">
        <Select label="English: USA" cls="w-[106px] !h-[19px]" />
        <CharIcon cls="ml-[6px] w-[14px] text-[13px] !font-normal">aa</CharIcon>
        <Select label="Strong" cls="ml-[6px] w-[64px] !h-[19px]" />
      </div>
      <div className="h-[1px] bg-[#2f2f2f] shrink-0" />
      <div className="h-[7px] flex items-center justify-center shrink-0">
        <div className="w-[19px] h-[4px] bg-[repeating-linear-gradient(90deg,#1f1f1f_0,#1f1f1f_1px,transparent_1px,transparent_2px)]" />
      </div>
    </>
  );
}

function Dock() {
  return (
    <div className="relative -mt-[5px] w-[212px] h-[593px] shrink-0 flex flex-col bg-[#535353] text-[#d0d0d0] font-['Roboto',sans-serif] text-[11px] tracking-[-0.2px] shadow-[-4px_0_4px_rgba(0,0,0,0.2)]">
      <div className="h-[13px] bg-[#3b3b3b] flex items-center justify-end pr-[8px] shrink-0">
        <svg width="8" height="7" viewBox="0 0 8 7"><path d="M4 0 V7 L0 3.5 Z M8 0 V7 L4 3.5 Z" fill="#c0c0c0" /></svg>
      </div>
      <LayersPanel />
      <div className="h-[3px] bg-[#2b2b2b] shrink-0" />
      <CharacterPanel />
    </div>
  );
}

function StatusBar() {
  return (
    <div className="h-[16px] shrink-0 bg-[#434343] flex items-center font-['Roboto',sans-serif] text-[11px] text-[#e8e8e8]">
      <div className="w-[49px] pl-[5px]">50%</div>
      <div className="w-[24px] h-full bg-[#5a5a5a] flex items-center justify-center">
        <svg width="12" height="12" viewBox="0 0 12 12"><circle cx="6" cy="6" r="5.5" fill="#a0a0a0" /><path d="M3 2 H7 L9 5 V9 H3 Z" fill="#e8e8e8" /></svg>
      </div>
      <div className="w-[171px] h-full bg-[#5a5a5a] ml-px pl-[41px] pt-[4px] flex items-center">Doc: 3.71M/0 bytes</div>
      <div className="w-[12px] h-full bg-[#4c4c4c] flex items-center justify-center">
        <svg width="6" height="9" viewBox="0 0 6 9"><path d="M0 0 L6 4.5 L0 9 Z" fill="#e8e8e8" /></svg>
      </div>
    </div>
  );
}

export default function App() {
  return (
    <div className="relative w-[1280px] h-[765px] overflow-hidden flex flex-col bg-[#292929] font-['Noto_Sans',sans-serif]">
      <MenuBar />
      <OptionsBar />
      <div className="h-[19px] shrink-0 bg-[#3c3c3c]" />
      <HRuler />
      <div className="flex-1 flex min-h-0">
        <VRuler />
        <div className="flex-1 pl-[333px] pt-[98px]">
          <div className="w-[650px] h-[450px] bg-white">
            <DocArt />
          </div>
        </div>
        <Dock />
      </div>
      <StatusBar />
      <div className="h-[6px] shrink-0 bg-[#1e2f3a] flex">
        <div className="ml-[48px] w-[344px] bg-white" />
        <div className="ml-[101px] w-[47px] bg-[#3b4f5c]" />
      </div>
      <ToolsPanel />
      <EditMenu />
      <div className="absolute left-[74px] top-[370px] w-[272px] h-[28px] border-[5px] border-[#ed1c24]" />
    </div>
  );
}
